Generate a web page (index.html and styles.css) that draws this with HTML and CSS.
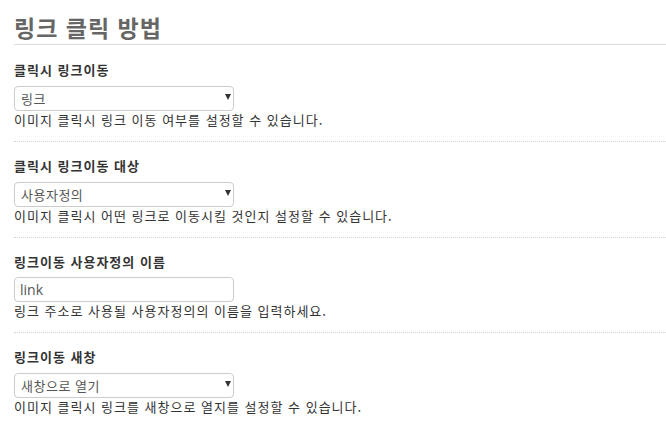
FILE: index.html
```html
<!DOCTYPE html>
<html lang="ko">
<head>
<meta charset="utf-8">
<title>링크 클릭 방법</title>
<link rel="stylesheet" href="styles.css">
</head>
<body>
<div class="page">
  <h2 class="title">링크 클릭 방법</h2>

  <div class="field">
    <label class="field-label">클릭시 링크이동</label>
    <div class="select-wrap"><select class="control"><option>링크</option></select></div>
    <p class="help">이미지 클릭시 링크 이동 여부를 설정할 수 있습니다.</p>
  </div>

  <div class="field">
    <label class="field-label">클릭시 링크이동 대상</label>
    <div class="select-wrap"><select class="control"><option>사용자정의</option></select></div>
    <p class="help">이미지 클릭시 어떤 링크로 이동시킬 것인지 설정할 수 있습니다.</p>
  </div>

  <div class="field">
    <label class="field-label">링크이동 사용자정의 이름</label>
    <input class="control input" type="text" value="link">
    <p class="help">링크 주소로 사용될 사용자정의의 이름을 입력하세요.</p>
  </div>

  <div class="field last">
    <label class="field-label">링크이동 새창</label>
    <div class="select-wrap"><select class="control"><option>새창으로 열기</option></select></div>
    <p class="help">이미지 클릭시 링크를 새창으로 열지를 설정할 수 있습니다.</p>
  </div>
</div>
</body>
</html>
```

FILE: styles.css
```css
html, body {
  margin: 0;
  padding: 0;
  background: #fff;
}

body {
  font-family: "Noto Sans CJK KR", "Noto Sans", sans-serif;
  color: #333;
}

.page {
  padding-left: 14px;
}

.title {
  margin: 13px 0 0;
  padding-bottom: 2px;
  font-size: 23px;
  line-height: 29px;
  font-weight: 700;
  letter-spacing: 1px;
  color: #666;
  border-bottom: 1px solid #dcdcdc;
}

.field {
  padding: 14px 0 12px;
  border-bottom: 1px dotted #d4d4d4;
  display: flex;
  flex-direction: column;
  align-items: flex-start;
}

.field:first-of-type {
  padding-top: 15px;
}

.field.last {
  border-bottom: none;
}

.field-label {
  font-size: 13px;
  line-height: 20px;
  font-weight: 700;
  letter-spacing: 1px;
  color: #333;
  margin-bottom: 5px;
}

.select-wrap {
  position: relative;
  width: 220px;
}

.select-wrap::after {
  content: "";
  position: absolute;
  right: 3px;
  top: 9px;
  border-left: 3px solid transparent;
  border-right: 3px solid transparent;
  border-top: 6px solid #333;
  pointer-events: none;
}

.control {
  -webkit-appearance: none;
  appearance: none;
  box-sizing: border-box;
  width: 220px;
  height: 25px;
  margin: 0;
  padding: 0 6px;
  border: 1px solid #ccc;
  border-radius: 4px;
  background: #fff;
  font-family: "Noto Sans CJK KR", "Noto Sans", sans-serif;
  font-size: 13px;
  letter-spacing: 0.5px;
  color: #555;
  outline: none;
}

.input {
  font-family: "Open Sans", "Noto Sans CJK KR", sans-serif;
  font-size: 14px;
  letter-spacing: 0;
  padding: 0 5px;
}

.help {
  margin: 0;
  font-size: 13px;
  line-height: 18px;
  letter-spacing: 1px;
  color: #333;
}
```
